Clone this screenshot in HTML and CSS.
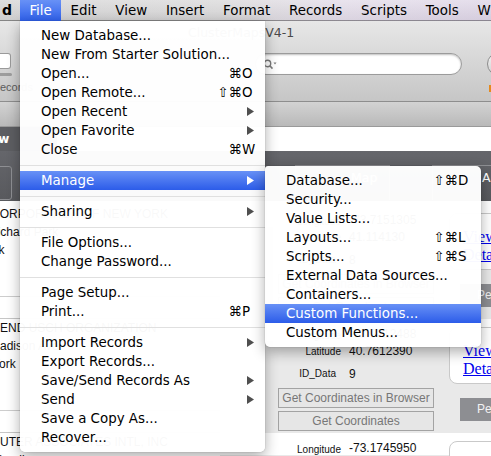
FILE: index.html
```html
<!DOCTYPE html>
<html>
<head>
<meta charset="utf-8">
<link rel="stylesheet" href="styles.css">
</head>
<body>
<div class="screen">
  <header class="menubar">
    <span class="mb-app">d</span>
    <span class="mb-item active">File</span>
    <span class="mb-item">Edit</span>
    <span class="mb-item">View</span>
    <span class="mb-item">Insert</span>
    <span class="mb-item">Format</span>
    <span class="mb-item">Records</span>
    <span class="mb-item">Scripts</span>
    <span class="mb-item">Tools</span>
    <span class="mb-item">Window</span>
  </header>

  <div class="window">
    <div class="toolbar">
      <div class="title-row">ClusterMapsV4-1</div>
      <div class="tools-row">
        <div class="tb-left">
          <div class="rec-field"></div>
          <div class="slider"></div>
          <div class="rec-label">Records</div>
        </div>
        <div class="search">
          <svg class="mag" width="14" height="11" viewBox="0 0 14 11"><circle cx="4.5" cy="4.5" r="3.2" fill="none" stroke="#7a7a7a" stroke-width="1.4"/><line x1="6.8" y1="6.8" x2="9.5" y2="9.6" stroke="#7a7a7a" stroke-width="1.6"/><polygon points="10.5,3.5 13.5,3.5 12,5.5" fill="#7a7a7a"/></svg>
        </div>
        <div class="tb-right">
          <div class="round-btn"></div>
          <div class="orange"></div>
        </div>
      </div>
    </div>
    <div class="layoutbar"></div>
    <div class="strip"><div class="view-btn">View</div></div>
    <div class="tabbar">
      <div class="left-box"></div>
      <div class="tab tab-map">Map</div>
      <div class="tab tab-all">All Clusters</div>
    </div>

    <div class="content">
      <div class="record">
        <div class="rec-left">
          <div class="rl-lines">
            <div class="rl name c1">CORPORATION OF NEW YORK</div>
            <div class="rl c2">Richard Park</div>
            <div class="rl c3">York</div>
          </div>
        </div>
        <div class="rec-main">
          <div class="gray-bg"></div>
          <div class="long-row"><span class="lbl">Longitude</span><span class="val">-73.7151305</span></div>
          <div class="fields">
            <div class="f-row lat"><span class="lbl">Latitude</span><span class="val">41.114130</span></div>
            <div class="f-row idr"><span class="lbl id">ID_Data</span><span class="val">8</span></div>
            <div class="btn b1">Get Coordinates in Browser</div>
            <div class="btn b2">Get Coordinates</div>
          </div>
          <div class="right">
            <div class="webbox"><span class="lnk">View</span><span class="lnk">Details</span></div>
            <div class="pe">People</div>
          </div>
        </div>
      </div>

      <div class="record">
        <div class="rec-left">
          <div class="rl-lines">
            <div class="rl name c4">LEGEND USCH ORGANIZATION</div>
            <div class="rl c5">Madison Ave</div>
            <div class="rl c6">New York</div>
          </div>
        </div>
        <div class="rec-main">
          <div class="gray-bg"></div>
          <div class="long-row"><span class="lbl">Longitude</span><span class="val">-73.9712488</span></div>
          <div class="fields">
            <div class="f-row lat"><span class="lbl">Latitude</span><span class="val">40.7612390</span></div>
            <div class="f-row idr"><span class="lbl id">ID_Data</span><span class="val">9</span></div>
            <div class="btn b1">Get Coordinates in Browser</div>
            <div class="btn b2">Get Coordinates</div>
          </div>
          <div class="right">
            <div class="webbox"><span class="lnk">View</span><span class="lnk">Details</span></div>
            <div class="pe">People</div>
          </div>
        </div>
      </div>

      <div class="record">
        <div class="rec-left">
          <div class="rl-lines">
            <div class="rl name c7">COMPUTER ASSOCIATES INTL, INC</div>
            <div class="rl c5">Islandia</div>
            <div class="rl c6">New York</div>
          </div>
        </div>
        <div class="rec-main">
          <div class="gray-bg"></div>
          <div class="long-row"><span class="lbl">Longitude</span><span class="val">-73.1745950</span></div>
          <div class="fields">
            <div class="f-row lat"><span class="lbl">Latitude</span><span class="val">40.8011360</span></div>
          </div>
          <div class="right">
            <div class="webbox"><span class="lnk">View</span><span class="lnk">Details</span></div>
          </div>
        </div>
      </div>
    </div>
  </div>

  <div class="menu main">
    <div class="mi"><span class="label">New Database...</span></div>
    <div class="mi"><span class="label">New From Starter Solution...</span></div>
    <div class="mi"><span class="label">Open...</span><span class="mods">⌘</span><span class="key">O</span></div>
    <div class="mi"><span class="label">Open Remote...</span><span class="mods">⇧⌘</span><span class="key">O</span></div>
    <div class="mi"><span class="label">Open Recent</span><svg class="arrow" viewBox="0 0 7 9"><polygon points="0,0 7,4.5 0,9"/></svg></div>
    <div class="mi"><span class="label">Open Favorite</span><svg class="arrow" viewBox="0 0 7 9"><polygon points="0,0 7,4.5 0,9"/></svg></div>
    <div class="mi"><span class="label">Close</span><span class="mods">⌘</span><span class="key">W</span></div>
    <div class="sep"></div>
    <div class="mi hl"><span class="label">Manage</span><svg class="arrow" viewBox="0 0 7 9"><polygon points="0,0 7,4.5 0,9"/></svg></div>
    <div class="sep"></div>
    <div class="mi"><span class="label">Sharing</span><svg class="arrow" viewBox="0 0 7 9"><polygon points="0,0 7,4.5 0,9"/></svg></div>
    <div class="sep"></div>
    <div class="mi"><span class="label">File Options...</span></div>
    <div class="mi"><span class="label">Change Password...</span></div>
    <div class="sep"></div>
    <div class="mi"><span class="label">Page Setup...</span></div>
    <div class="mi"><span class="label">Print...</span><span class="mods">⌘</span><span class="key">P</span></div>
    <div class="sep"></div>
    <div class="mi"><span class="label">Import Records</span><svg class="arrow" viewBox="0 0 7 9"><polygon points="0,0 7,4.5 0,9"/></svg></div>
    <div class="mi"><span class="label">Export Records...</span></div>
    <div class="mi"><span class="label">Save/Send Records As</span><svg class="arrow" viewBox="0 0 7 9"><polygon points="0,0 7,4.5 0,9"/></svg></div>
    <div class="mi"><span class="label">Send</span><svg class="arrow" viewBox="0 0 7 9"><polygon points="0,0 7,4.5 0,9"/></svg></div>
    <div class="mi"><span class="label">Save a Copy As...</span></div>
    <div class="mi"><span class="label">Recover...</span></div>
  </div>

  <div class="menu sub">
    <div class="mi"><span class="label">Database...</span><span class="mods">⇧⌘</span><span class="key">D</span></div>
    <div class="mi"><span class="label">Security...</span></div>
    <div class="mi"><span class="label">Value Lists...</span></div>
    <div class="mi"><span class="label">Layouts...</span><span class="mods">⇧⌘</span><span class="key">L</span></div>
    <div class="mi"><span class="label">Scripts...</span><span class="mods">⇧⌘</span><span class="key">S</span></div>
    <div class="mi"><span class="label">External Data Sources...</span></div>
    <div class="mi"><span class="label">Containers...</span></div>
    <div class="mi hl"><span class="label">Custom Functions...</span></div>
    <div class="mi"><span class="label">Custom Menus...</span></div>
  </div>
</div>
</body>
</html>
```

FILE: styles.css
```css
html, body {
  margin: 0;
  padding: 0;
  background: #fff;
}

.screen {
  position: relative;
  width: 491px;
  height: 456px;
  overflow: hidden;
  background: #fff;
  font-family: "DejaVu Sans", sans-serif;
}

/* ---------- menu bar ---------- */
.menubar {
  height: 21px;
  display: flex;
  font-size: 13.4px;
  color: #000;
  white-space: nowrap;
  background:
    linear-gradient(rgba(255,255,255,0.25), rgba(0,0,0,0.04)),
    linear-gradient(to right, #d4d4d4 0%, #d9d8d9 45%, #e2dbe8 70%, #ddd4e6 100%);
  box-shadow: inset 0 -1px 0 rgba(0,0,0,0.35);
}
.mb-app {
  flex-shrink: 0;
  width: 20px;
  box-sizing: border-box;
  padding-left: 2px;
  font-weight: bold;
  font-size: 14px;
  line-height: 21px;
}
.mb-item {
  flex-shrink: 0;
  padding: 0 9.4px;
  line-height: 21px;
}
.mb-item.active {
  background: linear-gradient(#6891f6, #2f60ea);
  color: #fff;
}

/* ---------- window chrome ---------- */
.toolbar {
  height: 81px;
  box-sizing: border-box;
  background: linear-gradient(#e7e7e7, #c6c6c6);
  border-bottom: 1px solid #8e8e8e;
}
.title-row {
  height: 24px;
  line-height: 24px;
  padding-left: 188px;
  font-size: 12.5px;
  color: #4a4a4a;
}
.tools-row {
  display: flex;
  height: 56px;
}
.tb-left {
  flex-shrink: 0;
  width: 255px;
  display: flex;
  flex-direction: column;
  padding-top: 8px;
  box-sizing: border-box;
}
.rec-field {
  width: 11px;
  height: 16px;
  background: #fff;
  border: 1px solid #9a9a9a;
  border-left: none;
  border-radius: 0 3px 3px 0;
  box-sizing: border-box;
}
.slider {
  width: 12px;
  height: 3px;
  margin-top: 4px;
  background: #9d9d9d;
  border-radius: 0 2px 2px 0;
}
.rec-label {
  margin-top: 5px;
  margin-left: -8px;
  font-family: "Liberation Sans", sans-serif;
  font-size: 11px;
  color: #5c5c5c;
}
.search {
  flex-shrink: 0;
  width: 207px;
  height: 22px;
  margin-top: 8px;
  box-sizing: border-box;
  background: #fff;
  border: 1px solid #9b9b9b;
  border-radius: 11px;
  box-shadow: inset 0 1px 2px rgba(0,0,0,0.25);
  display: flex;
  align-items: center;
  padding-left: 7px;
}
.tb-right {
  flex-shrink: 0;
  width: 60px;
  display: flex;
  flex-direction: column;
  padding-left: 25px;
  box-sizing: border-box;
}
.round-btn {
  flex-shrink: 0;
  width: 24px;
  height: 24px;
  margin-top: 7px;
  border: 1px solid #8c8c8c;
  border-radius: 50%;
  background: linear-gradient(#f5f5f5, #d0d0d0);
  box-sizing: border-box;
}
.orange {
  width: 8px;
  height: 7px;
  margin-top: 9px;
  margin-left: 2px;
  background: #e58a1f;
}
.layoutbar {
  height: 24px;
  background: linear-gradient(#d3d3d3, #b9b9b9);
  border-bottom: 1px solid #9a9a9a;
}
.strip {
  height: 24px;
  background: #fff;
  display: flex;
}
.view-btn {
  flex-shrink: 0;
  margin-left: -23px;
  width: 80px;
  background: #5d5e62;
  color: #fff;
  font-size: 12px;
  font-weight: bold;
  line-height: 24px;
}
.tabbar {
  height: 50px;
  background: linear-gradient(#65666b, #58595d);
  display: flex;
  align-items: flex-end;
  padding-bottom: 1px;
  box-sizing: border-box;
}
.left-box {
  flex-shrink: 0;
  width: 52px;
  height: 34px;
  margin-left: -40px;
  border: 1px solid #8e8f93;
  border-radius: 3px;
  box-sizing: border-box;
}
.tab {
  flex-shrink: 0;
  height: 35px;
  border: 1px solid #8e8f93;
  border-bottom: none;
  box-sizing: border-box;
  color: #fff;
  font-size: 12.5px;
  line-height: 24px;
  white-space: nowrap;
}
.tab-map {
  margin-left: 283px;
  width: 95px;
  padding-left: 55px;
}
.tab-all {
  margin-left: 42px;
  width: 140px;
  padding-left: 49px;
}

/* ---------- records ---------- */
.content {
  padding-top: 4px;
  display: flex;
  flex-direction: column;
  font-family: "Liberation Sans", sans-serif;
}
.record {
  height: 114px;
  display: flex;
  flex-shrink: 0;
  box-sizing: border-box;
}
.rec-left {
  width: 220px;
  flex-shrink: 0;
  border-bottom: 1px solid #c6c6c6;
  box-sizing: border-box;
  overflow: hidden;
}
.rl-lines {
  height: 92px;
  border-bottom: 1px solid #cdcdcd;
  box-sizing: border-box;
}
.rl {
  height: 18px;
  line-height: 18px;
  font-size: 12px;
  color: #111;
  white-space: nowrap;
}
.c1 { margin-left: -9px; }
.c2 { margin-left: -11px; }
.c3 { margin-left: -19px; }
.c4 { margin-left: -24px; }
.c5 { margin-left: -10px; }
.c6 { margin-left: -35px; }
.c7 { margin-left: -36px; }

.rec-main {
  flex: 1;
  display: grid;
  grid-template-columns: 227px 1fr;
  grid-template-rows: 22px 92px;
}
.gray-bg {
  grid-column: 1 / 3;
  grid-row: 2;
  background: #e9e9e9;
}
.long-row {
  grid-column: 1;
  grid-row: 1;
  display: flex;
  align-items: flex-end;
}
.lbl {
  width: 121px;
  flex-shrink: 0;
  text-align: right;
  font-size: 10px;
  color: #111;
  box-sizing: border-box;
}
.lbl.id { padding-right: 5px; }
.val {
  margin-left: 8px;
  font-size: 12px;
  color: #111;
}
.fields {
  grid-column: 1;
  grid-row: 2;
  display: flex;
  flex-direction: column;
}
.f-row {
  display: flex;
  align-items: center;
}
.f-row.lat { height: 20px; }
.f-row.idr { height: 25px; }
.btn {
  margin-left: 58px;
  width: 156px;
  height: 20px;
  box-sizing: border-box;
  border: 1px solid #a3a3a3;
  background: #e6e6e6;
  color: #777;
  font-size: 12px;
  line-height: 18px;
  text-align: center;
  white-space: nowrap;
}
.b1 { margin-top: 2px; }
.b2 { margin-top: 3px; }
.right {
  grid-column: 2;
  grid-row: 1 / 3;
  display: flex;
  flex-direction: column;
}
.webbox {
  margin-top: 8px;
  margin-left: 2px;
  width: 110px;
  height: 57px;
  box-sizing: border-box;
  background: #fff;
  border: 1px solid #c9c9c9;
  border-radius: 8px;
  padding: 14px 0 0 13px;
  display: flex;
  flex-direction: column;
}
.lnk {
  font-family: "Liberation Serif", serif;
  font-size: 16px;
  line-height: 18px;
  color: #0000ee;
  text-decoration: underline;
  white-space: nowrap;
}
.pe {
  margin-top: 14px;
  margin-left: 13px;
  width: 90px;
  height: 23px;
  background: #8d8e92;
  color: #f2f2f2;
  font-size: 12px;
  line-height: 23px;
  padding-left: 17px;
  box-sizing: border-box;
}

/* ---------- menus ---------- */
.menu {
  position: absolute;
  box-sizing: border-box;
  padding: 5px 0;
  background: rgba(255,255,255,0.972);
  box-shadow: 0 5px 14px rgba(0,0,0,0.32), 0 0 1px rgba(0,0,0,0.45);
  font-family: "DejaVu Sans", sans-serif;
  font-size: 13.4px;
  color: #000;
}
.menu.main {
  left: 20px;
  top: 21px;
  width: 245px;
  border-radius: 0 0 5px 5px;
}
.menu.sub {
  left: 265px;
  top: 166px;
  width: 216px;
  border-radius: 3px 5px 5px 5px;
}
.mi {
  height: 19px;
  display: flex;
  align-items: center;
  padding: 0 11px 0 21px;
  white-space: nowrap;
}
.mi .label { flex: 1; }
.mi .key { width: 12px; }
.mi.hl {
  background: linear-gradient(#6891f6, #2c5ce9);
  color: #fff;
}
.arrow {
  width: 7px;
  height: 9px;
  fill: #4f4f4f;
}
.mi.hl .arrow { fill: #fff; }
.sep {
  height: 12px;
  display: flex;
  align-items: center;
}
.sep::before {
  content: "";
  flex: 1;
  height: 1px;
  background: #e0e0e0;
}
```
